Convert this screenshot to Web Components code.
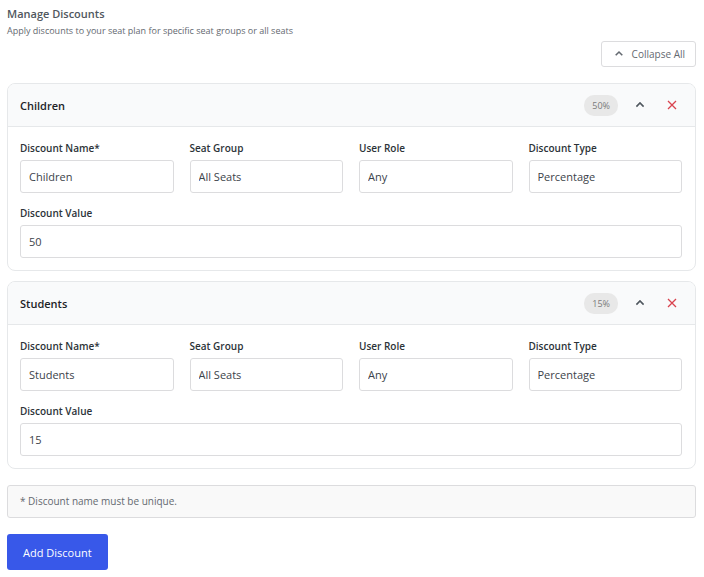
<!DOCTYPE html>
<html lang="en">
<head>
<meta charset="utf-8">
<meta name="viewport" content="width=device-width, initial-scale=1">
<title>Manage Discounts</title>
<style>
  body {
    margin: 0;
    background: #fff;
    color: #2c3338;
    font-family: "Open Sans", "Noto Sans", sans-serif;
    font-size: 11px;
  }
</style>
</head>
<body>
<discount-manager>
  <discount-card name="Children" value="50"></discount-card>
  <discount-card name="Students" value="15"></discount-card>
</discount-manager>

<script>
class DiscountField extends HTMLElement {
  connectedCallback() {
    const label = this.getAttribute('label');
    const value = this.getAttribute('value');
    const control = this.hasAttribute('select')
      ? `<select id="control"><option>${value}</option></select>`
      : `<input id="control" type="text" value="${value}">`;

    this.attachShadow({ mode: 'open' });
    this.shadowRoot.innerHTML = `
      <style>
        :host {
          display: flex;
          flex-direction: column;
          gap: 4px;
          min-width: 0;
        }

        label {
          font-size: 10px;
          font-weight: 600;
          line-height: 16px;
        }

        input,
        select {
          appearance: none;
          box-sizing: border-box;
          width: 100%;
          height: 33px;
          margin: 0;
          padding: 0 8px;
          border: 1px solid #dcdcde;
          border-radius: 3px;
          background: #fff;
          color: #3c434a;
          font: inherit;
          font-size: 11px;
        }
      </style>

      <label for="control">${label}</label>
      ${control}
    `;
  }
}

class DiscountCard extends HTMLElement {
  connectedCallback() {
    const name = this.getAttribute('name');
    const value = this.getAttribute('value');

    this.attachShadow({ mode: 'open' });
    this.shadowRoot.innerHTML = `
      <style>
        :host {
          display: block;
          overflow: hidden;
          border: 1px solid #e6e8ea;
          border-radius: 8px;
          background: #fff;
        }

        header {
          display: flex;
          align-items: center;
          box-sizing: border-box;
          height: 43px;
          padding: 0 13px 0 12px;
          border-bottom: 1px solid #e6e8ea;
          background: #f9fafb;
        }

        h3 {
          flex: 1;
          margin: 0;
          color: #1d2327;
          font-size: 11px;
          font-weight: 600;
        }

        .badge {
          padding: 0 8px;
          border-radius: 10px;
          background: #e8e8e8;
          color: #7a7a7a;
          font-size: 9px;
          line-height: 21px;
        }

        button {
          display: flex;
          align-items: center;
          justify-content: center;
          width: 20px;
          height: 20px;
          margin: 0 0 0 12px;
          padding: 0;
          border: 0;
          background: none;
          color: #50575e;
        }

        .remove {
          color: #d9434e;
        }

        .fields {
          display: grid;
          grid-template-columns: repeat(4, 1fr);
          gap: 12px 16px;
          padding: 13px 13px 12px 12px;
        }

        .wide {
          grid-column: 1 / -1;
        }
      </style>

      <header>
        <h3>${name}</h3>
        <span class="badge">${value}%</span>
        <button type="button" aria-label="Collapse">
          <svg width="10" height="10" viewBox="0 0 10 10" fill="none" stroke="currentColor" stroke-width="1.6"><path d="M1.4 6.6 5 3l3.6 3.6"/></svg>
        </button>
        <button type="button" class="remove" aria-label="Remove">
          <svg width="10" height="10" viewBox="0 0 10 10" fill="none" stroke="currentColor" stroke-width="1.3"><path d="M1 1l8 8M9 1 1 9"/></svg>
        </button>
      </header>
      <div class="fields">
        <discount-field label="Discount Name*" value="${name}"></discount-field>
        <discount-field label="Seat Group" value="All Seats" select></discount-field>
        <discount-field label="User Role" value="Any" select></discount-field>
        <discount-field label="Discount Type" value="Percentage" select></discount-field>
        <discount-field class="wide" label="Discount Value" value="${value}"></discount-field>
      </div>
    `;
  }
}

class DiscountManager extends HTMLElement {
  connectedCallback() {
    this.attachShadow({ mode: 'open' });
    this.shadowRoot.innerHTML = `
      <style>
        :host {
          display: flex;
          flex-direction: column;
          gap: 16px;
          padding: 5px 8px 7px 7px;
        }

        .top {
          display: flex;
          flex-direction: column;
        }

        h2 {
          margin: 0;
          color: #50575e;
          font-size: 11px;
          font-weight: 600;
          line-height: 18px;
        }

        p {
          margin: 0;
        }

        .intro {
          margin-bottom: 2px;
          color: #646970;
          font-size: 9px;
          line-height: 16px;
        }

        button {
          border-radius: 3px;
          font: inherit;
        }

        .collapse {
          display: flex;
          align-items: center;
          align-self: flex-end;
          gap: 8px;
          height: 26px;
          padding: 0 10px 0 12px;
          border: 1px solid #dcdcde;
          background: #fff;
          color: #646970;
          font-size: 10px;
        }

        .cards {
          display: flex;
          flex-direction: column;
          gap: 10px;
        }

        .note {
          padding: 0 13px 0 12px;
          border: 1px solid #dcdcde;
          border-radius: 3px;
          background: #f9f9f9;
          color: #646970;
          font-size: 10px;
          line-height: 31px;
        }

        .add {
          align-self: flex-start;
          height: 36px;
          padding: 0 16px;
          border: 0;
          background: #3858e9;
          color: #fff;
          font-size: 11px;
        }
      </style>

      <div class="top">
        <h2>Manage Discounts</h2>
        <p class="intro">Apply discounts to your seat plan for specific seat groups or all seats</p>
        <button type="button" class="collapse">
          <svg width="10" height="10" viewBox="0 0 10 10" fill="none" stroke="currentColor" stroke-width="1.6"><path d="M1.7 6.2 5 3l3.3 3.2"/></svg>
          Collapse All
        </button>
      </div>
      <div class="cards"><slot></slot></div>
      <p class="note">* Discount name must be unique.</p>
      <button type="button" class="add">Add Discount</button>
    `;
  }
}

customElements.define('discount-field', DiscountField);
customElements.define('discount-card', DiscountCard);
customElements.define('discount-manager', DiscountManager);
</script>
</body>
</html>
